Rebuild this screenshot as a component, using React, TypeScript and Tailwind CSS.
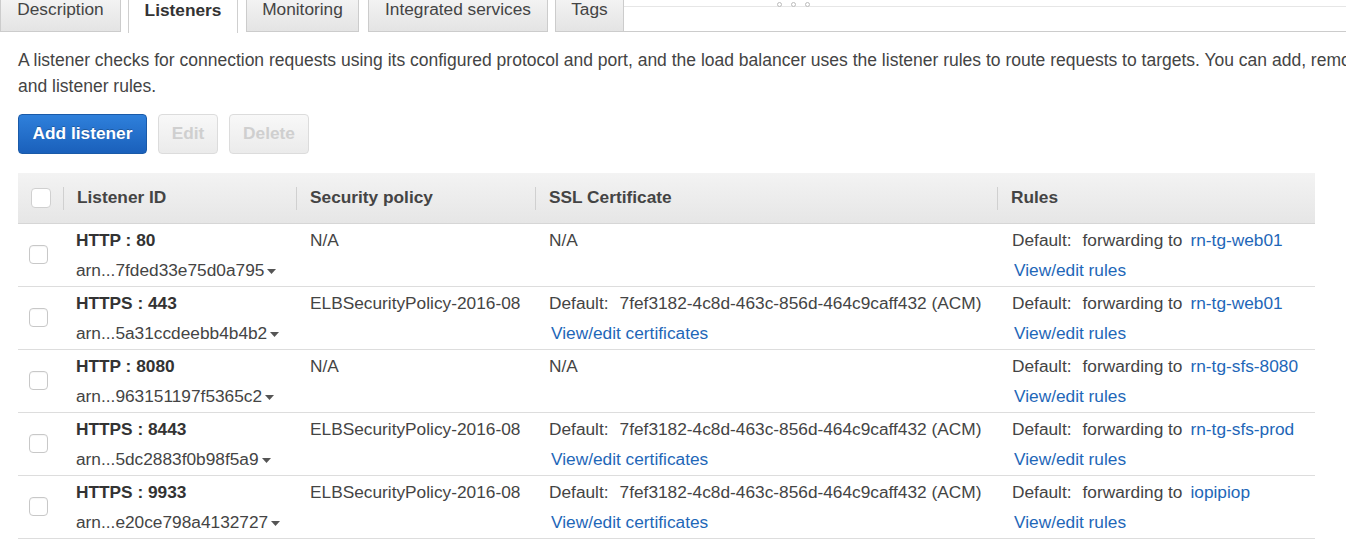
import React from 'react'

interface Listener {
    proto: string
    arn: string
    policy: string
    cert: string | null
    target: string
}

const listeners: Listener[] = [
    { proto: 'HTTP : 80', arn: 'arn...7fded33e75d0a795', policy: 'N/A', cert: null, target: 'rn-tg-web01' },
    { proto: 'HTTPS : 443', arn: 'arn...5a31ccdeebb4b4b2', policy: 'ELBSecurityPolicy-2016-08', cert: '7fef3182-4c8d-463c-856d-464c9caff432 (ACM)', target: 'rn-tg-web01' },
    { proto: 'HTTP : 8080', arn: 'arn...963151197f5365c2', policy: 'N/A', cert: null, target: 'rn-tg-sfs-8080' },
    { proto: 'HTTPS : 8443', arn: 'arn...5dc2883f0b98f5a9', policy: 'ELBSecurityPolicy-2016-08', cert: '7fef3182-4c8d-463c-856d-464c9caff432 (ACM)', target: 'rn-tg-sfs-prod' },
    { proto: 'HTTPS : 9933', arn: 'arn...e20ce798a4132727', policy: 'ELBSecurityPolicy-2016-08', cert: '7fef3182-4c8d-463c-856d-464c9caff432 (ACM)', target: 'iopipiop' },
]

// tab label + fixed width (px) taken from the console layout
const tabs: { label: string; w: string; ml: string }[] = [
    { label: 'Description', w: 'w-[121px]', ml: 'ml-0' },
    { label: 'Listeners', w: 'w-[110px]', ml: 'ml-[7px]' },
    { label: 'Monitoring', w: 'w-[113px]', ml: 'ml-[8px]' },
    { label: 'Integrated services', w: 'w-[180px]', ml: 'ml-[9px]' },
    { label: 'Tags', w: 'w-[69px]', ml: 'ml-[7px]' },
]

function Checkbox() {
    return <div className="w-[19px] h-[19px] rounded-[4px] border border-[#c8c8c8] bg-white shadow-[inset_0_1px_1px_rgba(0,0,0,0.04)]" />
}

function Caret() {
    return (
        <svg width="9" height="5" viewBox="0 0 9 5" className="ml-[3px] mt-[3px]">
            <polygon points="0,0 9,0 4.5,5" fill="#555" />
        </svg>
    )
}

function HeaderCell({ label, className }: { label: string; className: string }) {
    return (
        <div className={`flex items-center h-full ${className}`}>
            <div className="w-px h-[23px] bg-[#d0d0d0]" />
            <span className="pl-[13px] font-bold text-[#444]">{label}</span>
        </div>
    )
}

export default function App() {
    return (
        <div className="w-full h-[543px] overflow-hidden bg-white font-['Liberation_Sans',Arial,sans-serif] text-[17.3px] text-[#444]">
            {/* tab strip, top of it scrolled out of view */}
            <div className="flex h-[38px] -mt-[6px] items-end">
                {tabs.map((t, i) => (
                    i === 1 ? (
                        <div key={t.label} className={`h-[39px] ${t.w} ${t.ml} pb-[6px] flex items-center justify-center bg-white border-x border-t border-[#cfcfcf] font-bold text-[#333] relative z-10 -mb-px`}>
                            {t.label}
                        </div>
                    ) : (
                        <div key={t.label} className={`h-[38px] ${t.w} ${t.ml} pb-[6px] flex items-center justify-center bg-gradient-to-b from-[#f5f5f5] to-[#e4e4e4] border border-[#cccccc] text-[#444]`}>
                            {t.label}
                        </div>
                    )
                ))}
                <div className="flex-1 h-[38px] relative border-b border-[#cccccc]">
                    <div className="mt-[12px] border-t border-[#e6e6e6]" />
                    <div className="absolute left-[153px] top-[8px] flex gap-[9px]">
                        <span className="w-[5px] h-[5px] rounded-full border border-[#bbb] bg-white" />
                        <span className="w-[5px] h-[5px] rounded-full border border-[#bbb] bg-white" />
                        <span className="w-[5px] h-[5px] rounded-full border border-[#bbb] bg-white" />
                    </div>
                </div>
            </div>

            <div className="pl-[18px]">
                <p className="mt-[15px] leading-[26px] whitespace-nowrap text-[17.5px]">
                    A listener checks for connection requests using its configured protocol and port, and the load balancer uses the listener rules to route requests to targets. You can add, remove, or update listeners
                    <br />
                    and listener rules.
                </p>

                <div className="flex gap-[11px] mt-[15px]">
                    <button className="h-[40px] w-[129px] rounded-[4px] border border-[#1a5aa8] bg-gradient-to-b from-[#2f80db] to-[#1a60bb] text-white font-bold [text-shadow:0_-1px_0_rgba(0,0,0,0.25)]">
                        Add listener
                    </button>
                    <button className="h-[40px] w-[60px] rounded-[4px] border border-[#dcdcdc] bg-gradient-to-b from-[#f8f8f8] to-[#ebebeb] text-[#cfcfcf] font-bold">
                        Edit
                    </button>
                    <button className="h-[40px] w-[80px] rounded-[4px] border border-[#dcdcdc] bg-gradient-to-b from-[#f8f8f8] to-[#ebebeb] text-[#cfcfcf] font-bold">
                        Delete
                    </button>
                </div>

                <div className="mt-[19px] w-[1297px]">
                    <div className="flex h-[51px] bg-gradient-to-b from-[#f3f3f3] to-[#e6e6e6] border-b border-[#d6d6d6]">
                        <div className="w-[45px] flex items-center pl-[13px]">
                            <div className="w-[20px] h-[20px] rounded-[4px] border border-[#d0d0d0] bg-white" />
                        </div>
                        <HeaderCell label="Listener ID" className="w-[233px]" />
                        <HeaderCell label="Security policy" className="w-[239px]" />
                        <HeaderCell label="SSL Certificate" className="w-[462px]" />
                        <HeaderCell label="Rules" className="flex-1" />
                    </div>

                    {listeners.map(l => (
                        <div key={l.proto} className="flex h-[63px] pt-[1px] border-b border-[#dddddd] leading-[30px]">
                            <div className="w-[45px] flex items-center pl-[11px] pb-[3px]">
                                <Checkbox />
                            </div>
                            <div className="w-[233px] pl-[13px]">
                                <div className="font-bold text-[#333]">{l.proto}</div>
                                <div className="flex items-center">
                                    <span>{l.arn}</span>
                                    <Caret />
                                </div>
                            </div>
                            <div className="w-[239px] pl-[14px]">{l.policy}</div>
                            <div className="w-[462px] pl-[14px]">
                                {l.cert ? (
                                    <>
                                        <div className="flex whitespace-nowrap">
                                            <span>Default:</span>
                                            <span className="ml-[11px]">{l.cert}</span>
                                        </div>
                                        <div className="pl-[2px] text-[#1e67b8]">View/edit certificates</div>
                                    </>
                                ) : (
                                    <div>N/A</div>
                                )}
                            </div>
                            <div className="flex-1 pl-[15px]">
                                <div className="flex whitespace-nowrap">
                                    <span>Default:</span>
                                    <span className="ml-[11px]">forwarding to</span>
                                    <span className="ml-[8px] text-[#1e67b8]">{l.target}</span>
                                </div>
                                <div className="pl-[2px] text-[#1e67b8]">View/edit rules</div>
                            </div>
                        </div>
                    ))}
                </div>
            </div>
        </div>
    )
}
